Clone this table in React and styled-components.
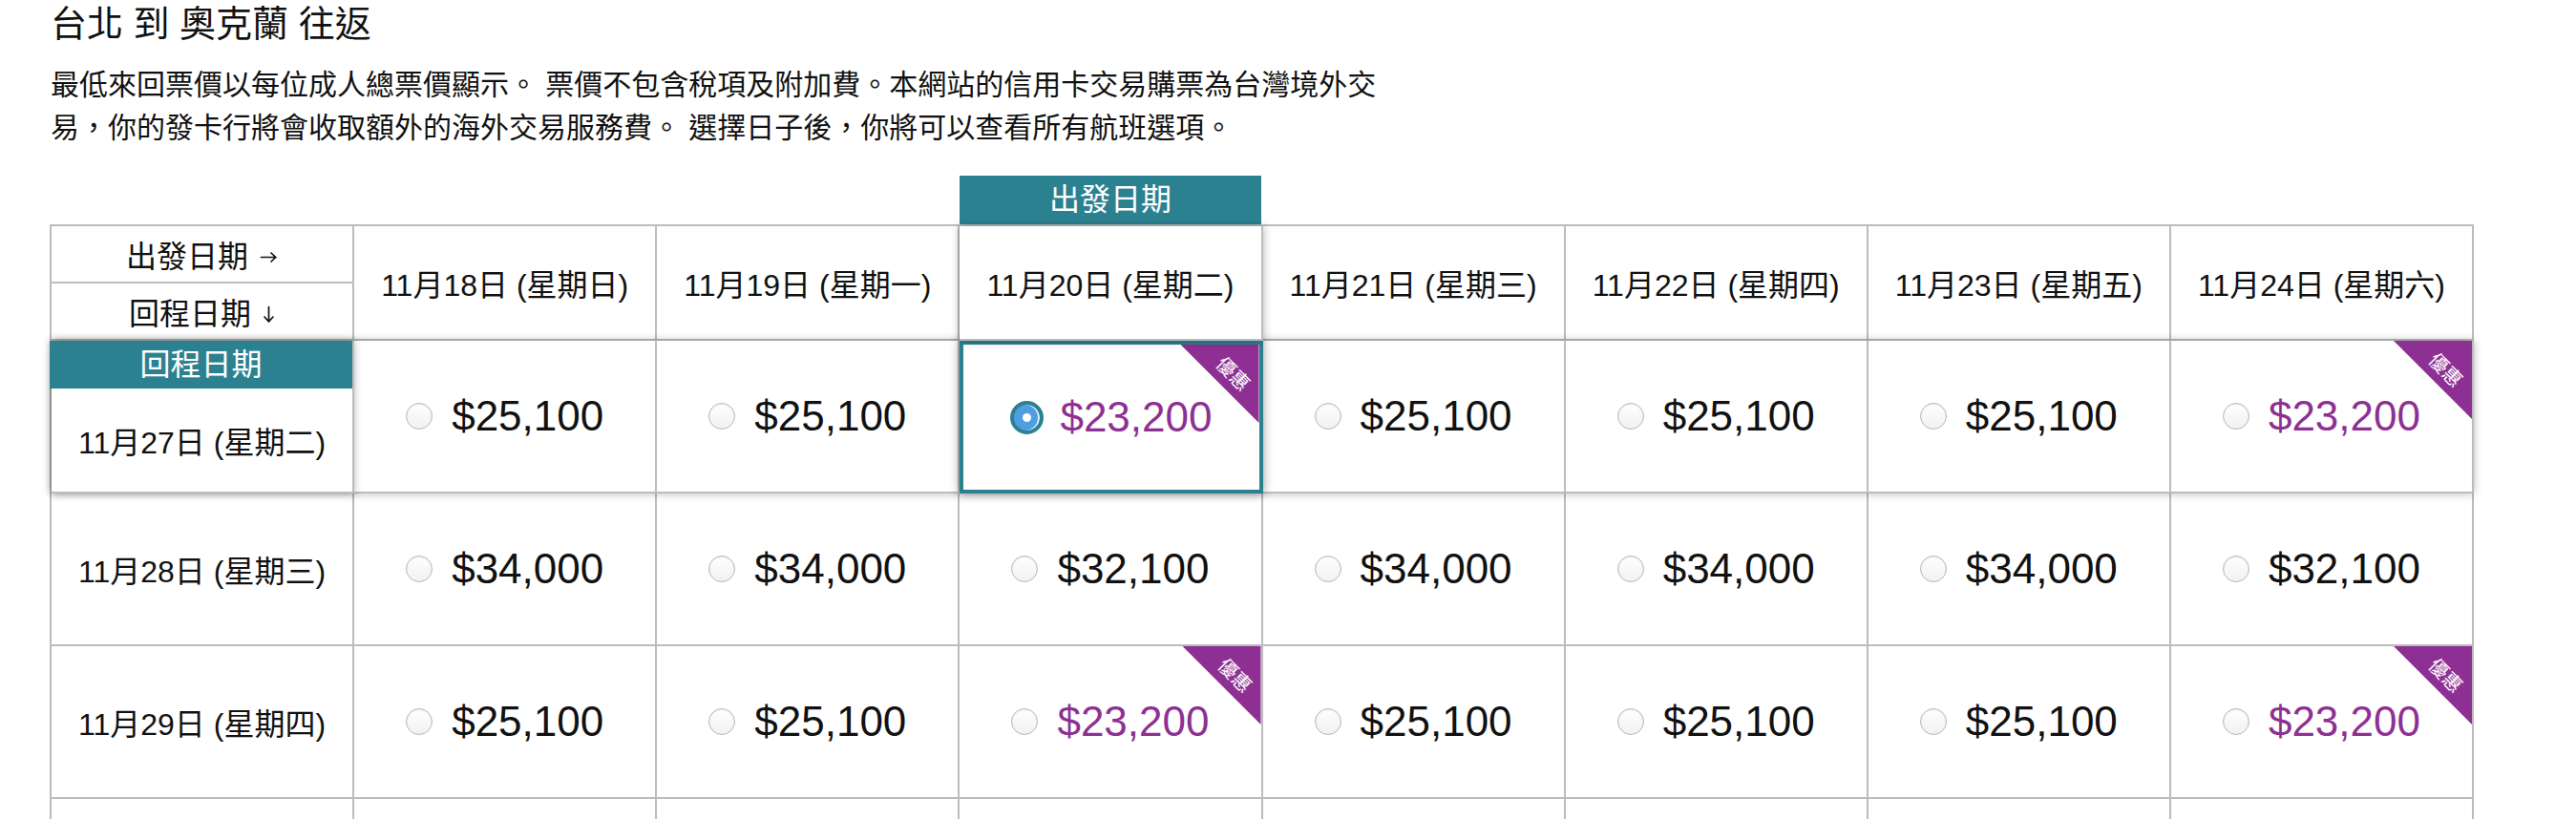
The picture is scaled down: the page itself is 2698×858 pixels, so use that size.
import React from "react";
import styled, { createGlobalStyle, css } from "styled-components";

const TEAL = "#2c8191";
const PURPLE = "#8e3093";
const LINE = "#bcbcbc";

const GlobalStyle = createGlobalStyle`
  html, body { margin: 0; padding: 0; background: #fff; }
  body {
    font-family: "Liberation Sans", "Noto Sans CJK TC", sans-serif;
    color: #111;
  }
`;

const Page = styled.div`
  padding: 0 0 0 52px;
`;

const Title = styled.h1`
  margin: 0;
  padding-left: 1px;
  font-size: 38px;
  line-height: 50px;
  font-weight: 400;
`;

const Intro = styled.p`
  margin: 16px 0 0;
  padding-left: 1px;
  max-width: 1436px;
  font-size: 30px;
  line-height: 45px;
`;

const Board = styled.div`
  margin-top: 28px;
  width: 2539px;
`;

const TabRow = styled.div`
  display: grid;
  grid-template-columns: repeat(8, 1fr);
  padding-left: 2px;
`;

const DepartTab = styled.div`
  grid-column: ${(p) => p.$col};
  height: 51px;
  background: ${TEAL};
  color: #fff;
  font-size: 32px;
  line-height: 51px;
  text-align: center;
  margin-right: 2px;
`;

const Table = styled.div`
  border-top: 2px solid ${LINE};
  border-left: 2px solid ${LINE};
`;

const Row = styled.div`
  display: grid;
  grid-template-columns: repeat(8, 1fr);
  height: ${(p) => (p.$head ? "120px" : "160px")};
  ${(p) =>
    p.$active &&
    css`
      position: relative;
      z-index: 1;
      box-shadow: 0 0 9px rgba(0, 0, 0, 0.28);
    `}
`;

const Cell = styled.div`
  position: relative;
  box-sizing: border-box;
  min-width: 0;
  border-right: 2px solid ${LINE};
  border-bottom: 2px solid ${LINE};
  background: #fff;
  display: flex;
  align-items: center;
  justify-content: center;
  font-size: 32px;
`;

const DateHead = styled(Cell)`
  ${(p) =>
    p.$active &&
    css`
      z-index: 2;
      box-shadow: 0 0 9px rgba(0, 0, 0, 0.3);
    `}
`;

const CornerCell = styled(Cell)`
  flex-direction: column;
  align-items: stretch;
`;

const CornerHalf = styled.div`
  flex: 1;
  display: flex;
  align-items: center;
  justify-content: center;
  gap: 12px;
  & + & {
    border-top: 2px solid ${LINE};
  }
`;

const ArrowIcon = styled.svg`
  flex: none;
  transform: translateY(3px);
  fill: none;
  stroke: #111;
  stroke-width: 1.7;
  stroke-linecap: round;
  stroke-linejoin: round;
`;

const ArrowRight = () => (
  <ArrowIcon width="19" height="13" viewBox="0 0 19 13">
    <path d="M1.5 6.5h15.5M12 2l4.8 4.5L12 11" />
  </ArrowIcon>
);

const ArrowDown = () => (
  <ArrowIcon width="13" height="19" viewBox="0 0 13 19">
    <path d="M6.5 1.5v15.5M2 12l4.5 4.8L11 12" />
  </ArrowIcon>
);

const LabelCell = styled(Cell)`
  flex-direction: column;
  align-items: stretch;
  ${(p) =>
    p.$active &&
    css`
      z-index: 2;
      box-shadow: 0 0 8px rgba(0, 0, 0, 0.3);
    `}
`;

const ReturnTag = styled.div`
  height: 50px;
  background: ${TEAL};
  color: #fff;
  font-size: 32px;
  line-height: 50px;
  text-align: center;
  margin-left: -2px;
`;

const LabelText = styled.div`
  flex: 1;
  display: flex;
  align-items: center;
  justify-content: center;
`;

const PriceCell = styled(Cell)`
  gap: 20px;
  ${(p) =>
    p.$selected &&
    css`
      z-index: 3;
      border: 4px solid ${TEAL};
      box-shadow: 0 0 10px rgba(0, 0, 0, 0.4);
      gap: 17px;
    `}
`;

const Radio = styled.span`
  flex: none;
  box-sizing: border-box;
  border-radius: 50%;
  position: relative;
  ${(p) =>
    p.$on
      ? css`
          width: 35px;
          height: 35px;
          border: 4px solid ${TEAL};
          background: #4f9ee2;
          box-shadow: inset -2px 0 0 rgba(255, 255, 255, 0.85);
          &::after {
            content: "";
            position: absolute;
            left: 50%;
            top: 50%;
            width: 9px;
            height: 9px;
            margin: -4.5px 0 0 -4.5px;
            border-radius: 50%;
            background: #fff;
          }
        `
      : css`
          width: 28px;
          height: 28px;
          border: 1px solid #b8b8b8;
          background: linear-gradient(#ffffff, #f1f1f1);
          box-shadow: inset 0 1px 2px rgba(0, 0, 0, 0.08);
        `}
`;

const Price = styled.span`
  font-size: 44px;
  line-height: 1;
  color: ${(p) => (p.$deal ? PURPLE : "#111")};
`;

const Badge = styled.div`
  position: absolute;
  top: 0;
  right: 0;
  width: 82px;
  height: 82px;
  background: ${PURPLE};
  clip-path: polygon(0 0, 100% 0, 100% 100%);
  pointer-events: none;
`;

const BadgeText = styled.span`
  position: absolute;
  left: 55px;
  top: 30px;
  transform: translate(-50%, -50%) rotate(45deg);
  font-size: 20px;
  line-height: 1;
  color: #fff;
  white-space: nowrap;
  font-family: "Noto Sans CJK TC", sans-serif;
`;

const departDates = [
  "11月18日 (星期日)",
  "11月19日 (星期一)",
  "11月20日 (星期二)",
  "11月21日 (星期三)",
  "11月22日 (星期四)",
  "11月23日 (星期五)",
  "11月24日 (星期六)",
];

const rows = [
  {
    label: "11月27日 (星期二)",
    prices: ["25,100", "25,100", "23,200", "25,100", "25,100", "25,100", "23,200"],
    deals: [2, 6],
  },
  {
    label: "11月28日 (星期三)",
    prices: ["34,000", "34,000", "32,100", "34,000", "34,000", "34,000", "32,100"],
    deals: [],
  },
  {
    label: "11月29日 (星期四)",
    prices: ["25,100", "25,100", "23,200", "25,100", "25,100", "25,100", "23,200"],
    deals: [2, 6],
  },
];

const SEL_COL = 2;
const SEL_ROW = 0;

export default function App() {
  return (
    <Page>
      <GlobalStyle />
      <Title>台北 到 奧克蘭 往返</Title>
      <Intro>
        最低來回票價以每位成人總票價顯示。 票價不包含稅項及附加費。本網站的信用卡交易購票為台灣境外交易，你的發卡行將會收取額外的海外交易服務費。 選擇日子後，你將可以查看所有航班選項。
      </Intro>
      <Board>
        <TabRow>
          <DepartTab $col={SEL_COL + 2}>出發日期</DepartTab>
        </TabRow>
        <Table>
          <Row $head>
            <CornerCell>
              <CornerHalf>
                出發日期
                <ArrowRight />
              </CornerHalf>
              <CornerHalf>
                回程日期
                <ArrowDown />
              </CornerHalf>
            </CornerCell>
            {departDates.map((d, i) => (
              <DateHead key={d} $active={i === SEL_COL}>
                {d}
              </DateHead>
            ))}
          </Row>
          {rows.map((r, ri) => (
            <Row key={r.label} $active={ri === SEL_ROW}>
              <LabelCell $active={ri === SEL_ROW}>
                {ri === SEL_ROW && <ReturnTag>回程日期</ReturnTag>}
                <LabelText>{r.label}</LabelText>
              </LabelCell>
              {r.prices.map((p, ci) => {
                const deal = r.deals.includes(ci);
                const selected = ri === SEL_ROW && ci === SEL_COL;
                return (
                  <PriceCell key={ci} $selected={selected}>
                    <Radio $on={selected} />
                    <Price $deal={deal}>${p}</Price>
                    {deal && (
                      <Badge>
                        <BadgeText>優惠</BadgeText>
                      </Badge>
                    )}
                  </PriceCell>
                );
              })}
            </Row>
          ))}
          <Row>
            {Array.from({ length: 8 }, (_, i) => (
              <Cell key={i} />
            ))}
          </Row>
        </Table>
      </Board>
    </Page>
  );
}
